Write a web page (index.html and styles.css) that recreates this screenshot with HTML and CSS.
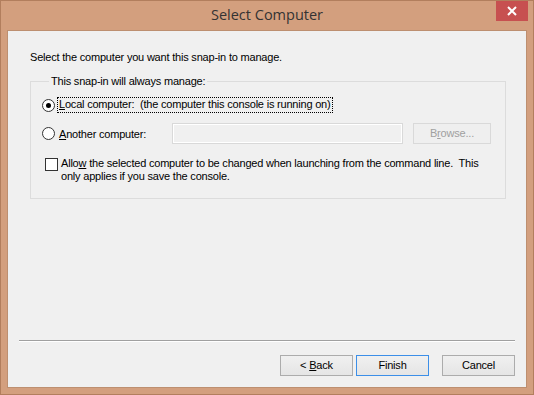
FILE: index.html
```html
<!DOCTYPE html>
<html lang="en">
<head>
  <meta charset="UTF-8" />
  <title>Select Computer</title>
  <link rel="stylesheet" href="styles.css">
</head>
<body>
  <div class="window">
    <div class="titlebar">
      <span class="title">Select Computer</span>
      <div class="close-btn">
        <svg width="10" height="10" viewBox="0 0 10 10">
          <path d="M1 1 L9 9 M9 1 L1 9" stroke="#fff" stroke-width="2" fill="none"/>
        </svg>
      </div>
    </div>

    <div class="client">
      <p class="intro">Select the computer you want this snap-in to manage.</p>

      <fieldset class="group">
        <legend>This snap-in will always manage:</legend>

        <div class="row row-local">
          <span class="radio checked"></span>
          <span class="focus-label"><u>L</u>ocal computer:&nbsp; (the computer this console is running on)</span>
        </div>

        <div class="row row-another">
          <span class="radio"></span>
          <span class="plain-label"><u>A</u>nother computer:</span>
          <div class="text-input"></div>
          <div class="btn disabled"><span>B<u>r</u>owse...</span></div>
        </div>

        <div class="row row-check">
          <span class="checkbox"></span>
          <span class="check-label">Allo<u>w</u> the selected computer to be changed when launching from the command line.&nbsp; This only applies if you save the console.</span>
        </div>
      </fieldset>

      <div class="footer">
        <div class="separator"></div>
        <div class="buttons">
          <div class="btn"><span>&lt; <u>B</u>ack</span></div>
          <div class="btn default"><span>Finish</span></div>
          <div class="btn cancel"><span>Cancel</span></div>
        </div>
      </div>
    </div>
  </div>
</body>
</html>
```

FILE: styles.css
```css
* {
  box-sizing: border-box;
  margin: 0;
  padding: 0;
}

body {
  width: 534px;
  height: 395px;
  font-family: 'Liberation Sans', Arial, sans-serif;
  font-size: 11px;
  letter-spacing: -0.2px;
  color: #000;
  overflow: hidden;
}

.window {
  position: relative;
  width: 534px;
  height: 395px;
  background: #d39f7e;
  border: 1px solid #b27e5d;
  display: flex;
  flex-direction: column;
  padding: 0 6px 6px 6px;
}

.titlebar {
  height: 29px;
  display: flex;
  align-items: center;
  justify-content: center;
}

.title {
  font-family: 'Open Sans', 'Noto Sans', sans-serif;
  font-size: 14.5px;
  letter-spacing: 0;
  color: #333;
  margin-top: -2px;
}

.close-btn {
  position: absolute;
  top: 0;
  right: 5px;
  width: 32px;
  height: 20px;
  background: #c75050;
  display: flex;
  align-items: center;
  justify-content: center;
}

.client {
  flex: 1;
  background: #f0f0f0;
  border: 1px solid #bd8f70;
  display: flex;
  flex-direction: column;
  padding: 20px 0 11px 0;
}

.intro {
  line-height: 13px;
  margin-left: 22px;
}

.group {
  margin: 11px 20px 0 22px;
  border: 1px solid #dcdcdc;
  padding: 0 0 0 11px;
  height: 124px;
}

.group legend {
  margin-left: 7px;
  padding: 0 2px;
  line-height: 13px;
}

.row {
  display: flex;
  align-items: center;
}

.row-local {
  margin-top: 9px;
  height: 16px;
}

.row-another {
  margin-top: 10px;
  height: 21px;
}

.row-check {
  align-items: flex-start;
  margin-top: 14px;
  padding-left: 3px;
}

.radio {
  width: 13px;
  height: 13px;
  border: 1px solid #333;
  border-radius: 50%;
  background: #fff;
  display: flex;
  align-items: center;
  justify-content: center;
  flex-shrink: 0;
}

.radio.checked::after {
  content: '';
  width: 5px;
  height: 5px;
  border-radius: 50%;
  background: #000;
}

.focus-label {
  margin-left: 2px;
  padding: 0 1px 1px 1px;
  border: 1px dotted #000;
  line-height: 13px;
}

.plain-label {
  margin-left: 4px;
  width: 113px;
}

.text-input {
  width: 231px;
  height: 21px;
  border: 1px solid #d9d9d9;
  box-shadow: inset 0 0 0 1px #fff;
  background: #f0f0f0;
}

.btn {
  width: 73px;
  height: 21px;
  border: 1px solid #acacac;
  background: linear-gradient(#f0f0f0, #e5e5e5);
  display: flex;
  align-items: center;
  justify-content: center;
  line-height: 13px;
}

.btn.disabled {
  width: 78px;
  margin-left: 10px;
  border-color: #d9d9d9;
  background: #efefef;
  color: #a0a0a0;
}

.checkbox {
  width: 13px;
  height: 13px;
  border: 1px solid #333;
  background: #fff;
  flex-shrink: 0;
}

.check-label {
  margin-left: 3px;
  line-height: 13px;
  width: 428px;
  margin-top: -1px;
}

.footer {
  margin-top: auto;
}

.separator {
  margin: 0 11px;
  height: 2px;
  border-top: 1px solid #a0a0a0;
  border-bottom: 1px solid #fff;
}

.buttons {
  display: flex;
  justify-content: flex-end;
  gap: 3px;
  margin: 13px 11px 0 0;
}

.btn.default {
  border-color: #3c8fe8;
}

.btn.cancel {
  margin-left: 10px;
}
```
